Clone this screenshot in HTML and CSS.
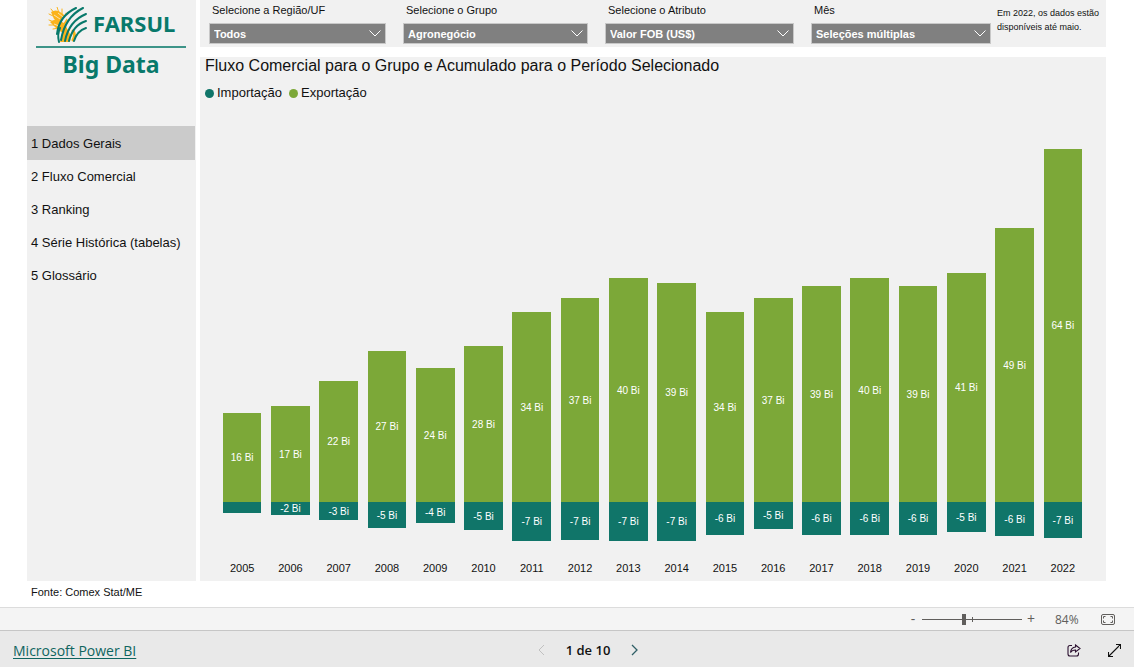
FILE: index.html
```html
<!DOCTYPE html>
<html lang="pt-BR">
<head>
<meta charset="utf-8">
<meta name="viewport" content="width=device-width, initial-scale=1">
<title>FARSUL Big Data</title>
<link rel="stylesheet" href="styles.css">
</head>
<body>
<div class="report">
  <aside class="sidebar">
    <div class="brand">
      <div class="brand-top">
        <svg class="brand-mark" viewBox="0 0 40 38" aria-hidden="true">
          <g fill="#fbb31c" stroke="#fbb31c" stroke-linecap="round">
            <path stroke="none" d="M3 5Q9 1 15 7Q20 11 21 18Q12 18 6 12Z"/>
            <path stroke="none" d="M2 15Q8 10 15 15Q20 20 20 28Q13 26 7 20Z"/>
            <path stroke="none" d="M14 19Q24 22 22 35H12Q16 28 14 19Z"/>
            <path fill="none" stroke-width="3" d="M25 24Q28 28 25 33"/>
            <path fill="none" stroke-width="1" d="M3 2L7 7M9 0L11 6M14 2L14 9M1 7L7 10M1 13L6 15M1 18L8 18M18 6L16 12M5 22L11 21"/>
          </g>
          <g fill="none" stroke="#fbe3ae" stroke-width="1"><path d="M6 8L12 12M10 6L15 10M6 17L11 19"/></g>
          <g fill="none" stroke="#f1f1f1" stroke-width="4">
            <path d="M28 2Q18 7 14 15"/>
            <path d="M35 2Q24 8 19 18"/>
          </g>
          <g fill="none" stroke="#08796b" stroke-width="2" stroke-linecap="round">
            <path d="M28 1Q11 9 9 27"/>
            <path d="M35 1Q17 10 13 33"/>
            <path d="M38 7Q21 14 17 34"/>
            <path d="M38 14Q25 18 21 34"/>
            <path d="M38 21Q29 24 26 34"/>
            <path d="M12 21Q9 27 11 35"/>
          </g>
        </svg>
        <span class="brand-name">FARSUL</span>
      </div>
      <div class="brand-sub">Big Data</div>
    </div>
    <nav class="menu">
      <a class="menu-item active" href="#dados">1 Dados Gerais</a>
      <a class="menu-item" href="#fluxo">2 Fluxo Comercial</a>
      <a class="menu-item" href="#ranking">3 Ranking</a>
      <a class="menu-item" href="#serie">4 Série Histórica (tabelas)</a>
      <a class="menu-item" href="#glossario">5 Glossário</a>
    </nav>
  </aside>
  <main class="content">
    <section class="filters">
      <div class="filter-group">
        <div class="filter">
          <label for="regiao">Selecione a Região/UF</label>
          <div class="select-box"><select id="regiao"><option>Todos</option></select><svg class="chevron" viewBox="0 0 12 7"><path d="M.5 .5L6 6l5.500-5.500"/></svg></div>
        </div>
        <div class="filter">
          <label for="grupo">Selecione o Grupo</label>
          <div class="select-box"><select id="grupo"><option>Agronegócio</option></select><svg class="chevron" viewBox="0 0 12 7"><path d="M.5 .5L6 6l5.500-5.500"/></svg></div>
        </div>
        <div class="filter">
          <label for="atributo">Selecione o Atributo</label>
          <div class="select-box"><select id="atributo"><option>Valor FOB (US$)</option></select><svg class="chevron" viewBox="0 0 12 7"><path d="M.5 .5L6 6l5.500-5.500"/></svg></div>
        </div>
        <div class="filter">
          <label for="mes">Mês</label>
          <div class="select-box"><select id="mes"><option>Seleções múltiplas</option></select><svg class="chevron" viewBox="0 0 12 7"><path d="M.5 .5L6 6l5.500-5.500"/></svg></div>
        </div>
      </div>
      <p class="note">Em 2022, os dados estão disponíveis até maio.</p>
    </section>
    <section class="chart">
      <h1 class="chart-title">Fluxo Comercial para o Grupo e Acumulado para o Período Selecionado</h1>
      <div class="legend">
        <span class="key"><i class="dot import"></i>Importação</span>
        <span class="key"><i class="dot export"></i>Exportação</span>
      </div>
      <div class="plot">
        <div class="col"><div class="bar export" style="height:89px">16 Bi</div><div class="below"><div class="bar import" style="height:11px"></div></div><span class="year">2005</span></div>
        <div class="col"><div class="bar export" style="height:96px">17 Bi</div><div class="below"><div class="bar import" style="height:13px">-2 Bi</div></div><span class="year">2006</span></div>
        <div class="col"><div class="bar export" style="height:121px">22 Bi</div><div class="below"><div class="bar import" style="height:18px">-3 Bi</div></div><span class="year">2007</span></div>
        <div class="col"><div class="bar export" style="height:151px">27 Bi</div><div class="below"><div class="bar import" style="height:26px">-5 Bi</div></div><span class="year">2008</span></div>
        <div class="col"><div class="bar export" style="height:134px">24 Bi</div><div class="below"><div class="bar import" style="height:21px">-4 Bi</div></div><span class="year">2009</span></div>
        <div class="col"><div class="bar export" style="height:156px">28 Bi</div><div class="below"><div class="bar import" style="height:28px">-5 Bi</div></div><span class="year">2010</span></div>
        <div class="col"><div class="bar export" style="height:190px">34 Bi</div><div class="below"><div class="bar import" style="height:39px">-7 Bi</div></div><span class="year">2011</span></div>
        <div class="col"><div class="bar export" style="height:204px">37 Bi</div><div class="below"><div class="bar import" style="height:38px">-7 Bi</div></div><span class="year">2012</span></div>
        <div class="col"><div class="bar export" style="height:224px">40 Bi</div><div class="below"><div class="bar import" style="height:39px">-7 Bi</div></div><span class="year">2013</span></div>
        <div class="col"><div class="bar export" style="height:219px">39 Bi</div><div class="below"><div class="bar import" style="height:39px">-7 Bi</div></div><span class="year">2014</span></div>
        <div class="col"><div class="bar export" style="height:190px">34 Bi</div><div class="below"><div class="bar import" style="height:33px">-6 Bi</div></div><span class="year">2015</span></div>
        <div class="col"><div class="bar export" style="height:204px">37 Bi</div><div class="below"><div class="bar import" style="height:27px">-5 Bi</div></div><span class="year">2016</span></div>
        <div class="col"><div class="bar export" style="height:216px">39 Bi</div><div class="below"><div class="bar import" style="height:33px">-6 Bi</div></div><span class="year">2017</span></div>
        <div class="col"><div class="bar export" style="height:224px">40 Bi</div><div class="below"><div class="bar import" style="height:33px">-6 Bi</div></div><span class="year">2018</span></div>
        <div class="col"><div class="bar export" style="height:216px">39 Bi</div><div class="below"><div class="bar import" style="height:33px">-6 Bi</div></div><span class="year">2019</span></div>
        <div class="col"><div class="bar export" style="height:229px">41 Bi</div><div class="below"><div class="bar import" style="height:30px">-5 Bi</div></div><span class="year">2020</span></div>
        <div class="col"><div class="bar export" style="height:274px">49 Bi</div><div class="below"><div class="bar import" style="height:34px">-6 Bi</div></div><span class="year">2021</span></div>
        <div class="col"><div class="bar export" style="height:353px">64 Bi</div><div class="below"><div class="bar import" style="height:36px">-7 Bi</div></div><span class="year">2022</span></div>
      </div>
    </section>
  </main>
</div>
<p class="source">Fonte: Comex Stat/ME</p>
<div class="zoombar">
  <button class="step" type="button" aria-label="Reduzir">-</button>
  <input class="slider" type="range" min="0" max="200" value="84" aria-label="Zoom">
  <button class="step" type="button" aria-label="Ampliar">+</button>
  <span class="percent">84%</span>
  <button class="icon-btn" type="button" aria-label="Ajustar à página"><svg width="14" height="11" viewBox="0 0 14 11" fill="none" stroke="#605e5c"><rect x=".5" y=".5" width="13" height="10" rx="1.5"/><path d="M2.500 4.500V2.500H4.500M9.500 2.500h2v2M11.500 6.500v2h-2M4.500 8.500h-2v-2"/></svg></button>
</div>
<footer class="footer">
  <a class="powerbi" href="#powerbi">Microsoft Power BI</a>
  <div class="pager">
    <button class="icon-btn" type="button" disabled aria-label="Página anterior"><svg width="7" height="12" viewBox="0 0 7 12" fill="none" stroke="#c0c0c0"><path d="M6 1L1 6l5 5"/></svg></button>
    <span>1 de 10</span>
    <button class="icon-btn" type="button" aria-label="Próxima página"><svg width="7" height="12" viewBox="0 0 7 12" fill="none" stroke="#2f5f66" stroke-width="1.300"><path d="M1 1l5 5-5 5"/></svg></button>
  </div>
  <div class="actions">
    <button class="icon-btn" type="button" aria-label="Compartilhar"><svg width="14" height="13" viewBox="0 0 14 13" fill="none" stroke="#2b1030" stroke-width="1.100"><path d="M5 1.500H3Q1 1.500 1 3.500V10q0 2 2 2h6.500q2 0 2-2V8.500"/><path d="M8.500 1l4.500 3.500L8.500 8V6Q5 6 3.500 8.500 4 3.500 8.500 3z"/></svg></button>
    <button class="icon-btn" type="button" aria-label="Tela cheia"><svg width="13" height="13" viewBox="0 0 13 13" fill="none" stroke="#111" stroke-width="1.100"><path d="M.5 12.500L12.500 .5M8 .5H12.500V5M.5 8V12.500H5"/></svg></button>
  </div>
</footer>
</body>
</html>
```
FILE: styles.css
```css
* { box-sizing: border-box; }
body {
  margin: 0;
  min-height: 100vh;
  display: flex;
  flex-direction: column;
  background: #fff;
  color: #111;
  font-family: "Liberation Sans", Arial, sans-serif;
}
button { border: 0; padding: 0; background: none; font: inherit; color: inherit; }
svg { display: block; }

.report {
  flex: 1;
  display: grid;
  grid-template-columns: 169px 1fr;
  gap: 4px;
  padding: 0 28px 0 27px;
}
.sidebar { background: #f1f1f1; }
.brand {
  height: 126px;
  padding: 5px 10px 0 9px;
  color: #08796b;
  font-family: "Noto Sans", sans-serif;
  font-weight: 700;
}
.brand-top {
  display: flex;
  align-items: center;
  gap: 5px;
  height: 43px;
  padding-left: 12px;
  border-bottom: 2px solid #3d9488;
}
.brand-mark { width: 40px; height: 38px; }
.brand-name { font-size: 22px; line-height: 34px; padding-bottom: 6px; }
.brand-sub { font-size: 23px; line-height: 32px; text-align: center; }
.menu-item {
  display: flex;
  align-items: center;
  height: 33px;
  padding-left: 4px;
  color: #111;
  font-size: 13px;
  text-decoration: none;
}
.menu-item.active { height: 34px; margin-right: 1px; background: #cbcbcb; }

.content { display: flex; flex-direction: column; gap: 10px; }
.filters {
  display: flex;
  gap: 6px;
  height: 47px;
  padding: 3px 5px 0 9px;
  background: #f1f1f1;
}
.filter-group {
  flex: 1;
  display: grid;
  grid-template-columns: 177fr 185fr 189fr 180fr;
  column-gap: 17px;
}
.filter label { display: block; padding-left: 3px; font-size: 11px; line-height: 14px; margin-bottom: 6px; }
.select-box { display: grid; align-items: center; }
.select-box > * { grid-area: 1 / 1; }
.select-box select {
  appearance: none;
  width: 100%;
  height: 21px;
  padding: 0 20px 0 4px;
  border: 1px solid #c8c8c8;
  border-radius: 0;
  background: #808080;
  color: #fff;
  font: bold 11px "Liberation Sans", Arial, sans-serif;
}
.chevron {
  justify-self: end;
  width: 12px;
  height: 7px;
  margin-right: 5px;
  fill: none;
  stroke: #fff;
  pointer-events: none;
}
.note { width: 104px; margin: 3px 0 0; font-size: 9px; line-height: 14px; }

.chart { flex: 1; display: flex; flex-direction: column; background: #f1f1f1; padding: 0 19px 4px 18px; }
.chart-title { margin: 0 0 0 -13px; font-size: 16px; font-weight: 400; line-height: 18px; }
.legend { display: flex; gap: 7px; margin: 9px 0 0 -13px; font-size: 13px; line-height: 18px; }
.key { display: flex; align-items: center; gap: 3px; }
.dot { width: 9px; height: 9px; border-radius: 50%; }
.import { background: #107569; }
.export { background: #7ca838; }
.plot { flex: 1; display: grid; grid-template-columns: repeat(18, 1fr); }
.col { display: flex; flex-direction: column; justify-content: flex-end; align-items: center; }
.bar {
  width: 80%;
  display: flex;
  align-items: center;
  justify-content: center;
  color: #fff;
  font-size: 10px;
}
.below { width: 100%; height: 58px; display: flex; justify-content: center; }
.year { font-size: 11px; line-height: 17px; }

.source { margin: 0; padding: 4px 31px 7px; font-size: 11px; line-height: 15px; }
.zoombar {
  display: flex;
  align-items: center;
  justify-content: flex-end;
  height: 23px;
  padding-right: 19px;
  border-top: 1px solid #dcdcdc;
  background: #f4f4f4;
  color: #605e5c;
  font-family: "Open Sans", sans-serif;
  font-size: 12px;
}
.step { width: 18px; font-size: 14px; line-height: 20px; }
.slider {
  appearance: none;
  width: 100px;
  height: 11px;
  margin: 0;
  background:
    linear-gradient(#605e5c, #605e5c) 50px 50% / 1px 5px no-repeat,
    linear-gradient(#605e5c, #605e5c) 0 50% / 100% 1px no-repeat;
}
.slider::-webkit-slider-thumb { appearance: none; width: 4px; height: 11px; background: #605e5c; }
.percent { width: 36px; margin: 0 10px 0 15px; }
.footer {
  display: grid;
  grid-template-columns: 1fr auto 1fr;
  align-items: center;
  height: 37px;
  padding: 2px 13px 0;
  border-top: 1px solid #c6c6c6;
  background: #e9e9e9;
  font-family: "Open Sans", sans-serif;
  font-size: 13px;
}
.powerbi { color: #0f6560; font-size: 14px; text-underline-offset: 2px; }
.pager { display: flex; align-items: center; gap: 21px; padding-left: 42px; font-weight: 600; }
.actions { display: flex; align-items: center; justify-content: flex-end; gap: 27px; }
```
